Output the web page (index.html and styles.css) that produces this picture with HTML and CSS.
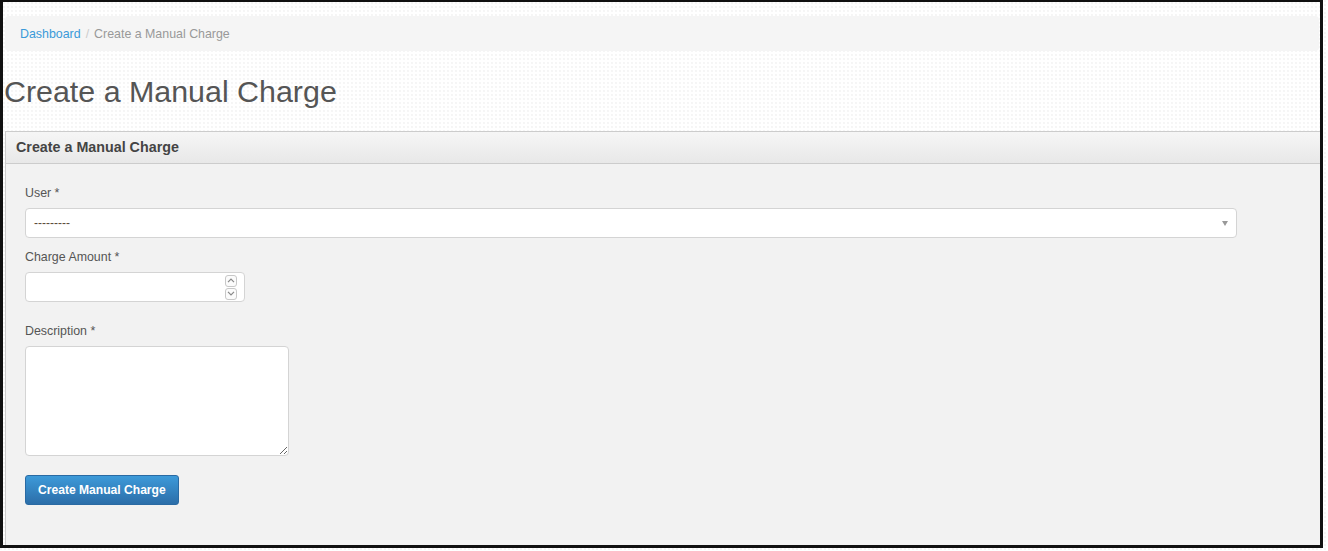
FILE: index.html
```html
<!DOCTYPE html>
<html lang="en">
<head>
<meta charset="utf-8">
<title>Create a Manual Charge</title>
<link rel="stylesheet" href="styles.css">
</head>
<body>
<div class="frame">
  <ol class="breadcrumb">
    <li><a href="#">Dashboard</a></li>
    <li class="sep">/</li>
    <li class="active">Create a Manual Charge</li>
  </ol>
  <h1 class="page-title">Create a Manual Charge</h1>
  <section class="panel">
    <header class="panel-heading">Create a Manual Charge</header>
    <form class="panel-body">
      <div class="group group-user">
        <label class="label">User *</label>
        <div class="select">
          <span class="select-text">---------</span>
          <span class="caret"></span>
        </div>
      </div>
      <div class="group group-amount">
        <label class="label">Charge Amount *</label>
        <div class="number">
          <div class="spinner">
            <span class="spin">
              <svg width="8" height="5" viewBox="0 0 8 5"><path d="M1 4.2 L4 1.2 L7 4.2" fill="none" stroke="#888" stroke-width="1.2"/></svg>
            </span>
            <span class="spin">
              <svg width="8" height="5" viewBox="0 0 8 5"><path d="M1 0.8 L4 3.8 L7 0.8" fill="none" stroke="#888" stroke-width="1.2"/></svg>
            </span>
          </div>
        </div>
      </div>
      <div class="group group-desc">
        <label class="label">Description *</label>
        <textarea class="textarea"></textarea>
      </div>
      <button type="button" class="btn">Create Manual Charge</button>
    </form>
  </section>
</div>
</body>
</html>
```
FILE: styles.css
```css
html, body {
  margin: 0;
  padding: 0;
}
body {
  width: 1328px;
  height: 551px;
  overflow: hidden;
  font-family: "Liberation Sans", Arial, sans-serif;
  background-color: #ffffff;
  background-image: radial-gradient(circle at 1px 1px, #ebebeb 0.5px, transparent 0.9px);
  background-size: 4px 4px;
}
.frame {
  box-sizing: border-box;
  width: 1323px;
  height: 548px;
  border: 3px solid #111111;
  border-top-width: 2px;
  overflow: hidden;
  background-color: #ffffff;
  background-image: radial-gradient(circle at 1px 1px, #ececec 0.5px, transparent 0.9px);
  background-size: 4px 4px;
}
.breadcrumb {
  list-style: none;
  display: flex;
  align-items: center;
  margin: 14px 1px 0 2px;
  padding: 9px 15px 7px;
  height: 19px;
  line-height: 19px;
  font-size: 12.4px;
  background: #f5f5f5;
  border-radius: 4px;
}
.breadcrumb a {
  color: #3a9ad9;
  text-decoration: none;
}
.breadcrumb .sep {
  color: #cccccc;
  padding: 0 5px;
}
.breadcrumb .active {
  color: #999999;
}
.page-title {
  margin: 24px 0 23px 1px;
  font-size: 30.4px;
  line-height: 33px;
  font-weight: normal;
  color: #555555;
}
.panel {
  margin: 0 -1px 0 2px;
  border: 1px solid #cccccc;
  background: #f2f2f2;
}
.panel-heading {
  height: 31px;
  line-height: 31px;
  padding: 0 10px;
  font-size: 14.3px;
  font-weight: bold;
  color: #444444;
  background: linear-gradient(#f6f6f6, #e8e8e8);
  border-bottom: 1px solid #cccccc;
}
.panel-body {
  margin: 0;
  padding: 19px 19px 40px;
  display: flex;
  flex-direction: column;
  align-items: flex-start;
}
.group {
  display: flex;
  flex-direction: column;
  align-items: flex-start;
}
.group-user { margin-bottom: 9px; align-self: stretch; }
.group-amount { margin-bottom: 19px; }
.group-desc { margin-bottom: 19px; }
.label {
  font-size: 12.4px;
  line-height: 18px;
  color: #555555;
  margin-top: 1px;
  margin-bottom: 6px;
}
.select {
  box-sizing: border-box;
  width: 1212px;
  height: 30px;
  background: #ffffff;
  border: 1px solid #d4d4d4;
  border-radius: 4px;
  display: flex;
  align-items: center;
  justify-content: space-between;
  padding: 0 8px 0 8px;
}
.select-text {
  font-size: 12px;
  color: #5a4a3a;
}
.caret {
  width: 0;
  height: 0;
  border-left: 3.5px solid transparent;
  border-right: 3.5px solid transparent;
  border-top: 5px solid #999999;
  margin-top: 1px;
}
.number {
  box-sizing: border-box;
  width: 220px;
  height: 30px;
  background: #ffffff;
  border: 1px solid #d4d4d4;
  border-radius: 4px;
  display: flex;
  justify-content: flex-end;
  align-items: center;
  padding-right: 7px;
}
.spinner {
  display: flex;
  flex-direction: column;
  gap: 1px;
}
.spin {
  box-sizing: border-box;
  width: 12px;
  height: 12px;
  border: 1px solid #c8c8c8;
  border-radius: 3px;
  background: #fbfbfb;
  display: flex;
  align-items: center;
  justify-content: center;
}
.textarea {
  box-sizing: border-box;
  width: 264px;
  height: 110px;
  margin: 0;
  background: #ffffff;
  border: 1px solid #d4d4d4;
  border-radius: 4px;
  resize: both;
  outline: none;
}
.btn {
  box-sizing: border-box;
  height: 30px;
  padding: 0 12px 0 12px;
  font-family: "Liberation Sans", Arial, sans-serif;
  font-size: 12.1px;
  font-weight: bold;
  color: #ffffff;
  background: linear-gradient(#3d9ad9, #2c6ea9);
  border: 1px solid #2a6aa3;
  border-radius: 3px;
  cursor: pointer;
}
```
